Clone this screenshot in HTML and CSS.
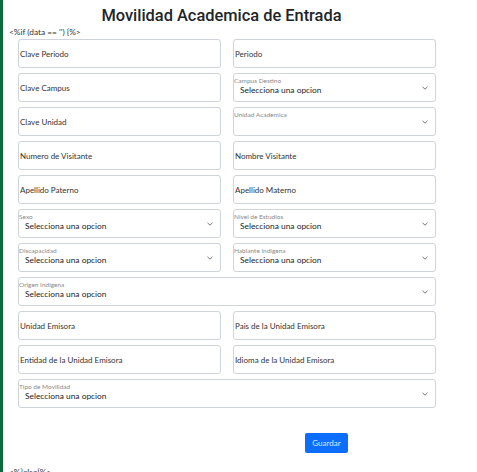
FILE: index.html
```html
<!DOCTYPE html>
<html lang="es">
<head>
<meta charset="utf-8">
<title>Movilidad Academica de Entrada</title>
<link rel="stylesheet" href="styles.css">
</head>
<body>
<div class="page">
  <h1 class="title">Movilidad Academica de Entrada</h1>
  <div class="tpl">&lt;%if (data == '') {%&gt;</div>
  <form class="form">
    <div class="field input"><span class="ph">Clave Periodo</span></div>
    <div class="field input"><span class="ph">Periodo</span></div>
    <div class="field input"><span class="ph">Clave Campus</span></div>
    <div class="field select"><span class="lbl">Campus Destino</span><span class="val">Selecciona una opcion</span><svg class="chev" viewBox="0 0 6 4"><path d="M0.5 0.8 L3 3.2 L5.5 0.8"/></svg></div>
    <div class="field input"><span class="ph">Clave Unidad</span></div>
    <div class="field select"><span class="lbl">Unidad Academica</span><span class="val"></span><svg class="chev" viewBox="0 0 6 4"><path d="M0.5 0.8 L3 3.2 L5.5 0.8"/></svg></div>
    <div class="field input"><span class="ph">Numero de Visitante</span></div>
    <div class="field input"><span class="ph">Nombre Visitante</span></div>
    <div class="field input"><span class="ph">Apellido Paterno</span></div>
    <div class="field input"><span class="ph">Apellido Materno</span></div>
    <div class="field select"><span class="lbl">Sexo</span><span class="val">Selecciona una opcion</span><svg class="chev" viewBox="0 0 6 4"><path d="M0.5 0.8 L3 3.2 L5.5 0.8"/></svg></div>
    <div class="field select"><span class="lbl">Nivel de Estudios</span><span class="val">Selecciona una opcion</span><svg class="chev" viewBox="0 0 6 4"><path d="M0.5 0.8 L3 3.2 L5.5 0.8"/></svg></div>
    <div class="field select"><span class="lbl">Discapacidad</span><span class="val">Selecciona una opcion</span><svg class="chev" viewBox="0 0 6 4"><path d="M0.5 0.8 L3 3.2 L5.5 0.8"/></svg></div>
    <div class="field select"><span class="lbl">Hablante indigena</span><span class="val">Selecciona una opcion</span><svg class="chev" viewBox="0 0 6 4"><path d="M0.5 0.8 L3 3.2 L5.5 0.8"/></svg></div>
    <div class="field select full"><span class="lbl">Origen Indigena</span><span class="val">Selecciona una opcion</span><svg class="chev" viewBox="0 0 6 4"><path d="M0.5 0.8 L3 3.2 L5.5 0.8"/></svg></div>
    <div class="field input"><span class="ph">Unidad Emisora</span></div>
    <div class="field input"><span class="ph">Pais de la Unidad Emisora</span></div>
    <div class="field input"><span class="ph">Entidad de la Unidad Emisora</span></div>
    <div class="field input"><span class="ph">Idioma de la Unidad Emisora</span></div>
    <div class="field select full"><span class="lbl">Tipo de Movilidad</span><span class="val">Selecciona una opcion</span><svg class="chev" viewBox="0 0 6 4"><path d="M0.5 0.8 L3 3.2 L5.5 0.8"/></svg></div>
  </form>
  <div class="actions"><button class="btn" type="button">Guardar</button></div>
  <div class="tpl tpl-end">&lt;%}else{%&gt;</div>
</div>
</body>
</html>
```

FILE: styles.css
```css
html, body {
  margin: 0;
  padding: 0;
  background: #fff;
}
body {
  font-family: Lato, "Noto Sans", sans-serif;
  color: #212529;
  border-left: 3px solid #0b6b3c;
  min-height: 472px;
  box-sizing: border-box;
}
.page {
  width: 437px;
}
.title {
  margin: 0;
  padding-top: 4px;
  font-family: Roboto, "Noto Sans", sans-serif;
  font-size: 16.4px;
  line-height: 23px;
  font-weight: 500;
  text-align: center;
  color: #212529;
}
.tpl {
  margin-left: 6px;
  font-size: 8.3px;
  line-height: 11px;
  color: #333;
}
.form {
  display: grid;
  grid-template-columns: 203px 203px;
  column-gap: 12px;
  row-gap: 5px;
  margin: 1px 0 0 15px;
}
.field {
  position: relative;
  height: 29px;
  box-sizing: border-box;
  border: 1px solid #ced4da;
  border-radius: 3px;
  background: #fff;
}
.full {
  grid-column: span 2;
}
.input {
  display: flex;
  align-items: center;
  padding-left: 1px;
}
.ph {
  font-size: 8px;
  color: #333;
}
.lbl {
  display: block;
  margin-top: 3px;
  font-size: 6.5px;
  line-height: 8px;
  color: #8a8a8a;
}
.val {
  display: block;
  margin-left: 6px;
  font-size: 8.4px;
  line-height: 11px;
  color: #212529;
}
.chev {
  position: absolute;
  right: 7px;
  top: 12px;
  width: 6px;
  height: 4px;
  fill: none;
  stroke: #555;
  stroke-width: 0.8;
}
.actions {
  display: flex;
  padding: 25px 0 0 302px;
}
.btn {
  width: 43px;
  height: 20px;
  padding: 0;
  border: 0;
  border-radius: 2px;
  background: #0d6efd;
  color: #dbe8ff;
  font-family: Lato, "Noto Sans", sans-serif;
  font-size: 8px;
}
.tpl-end {
  margin-top: 14px;
}
```
